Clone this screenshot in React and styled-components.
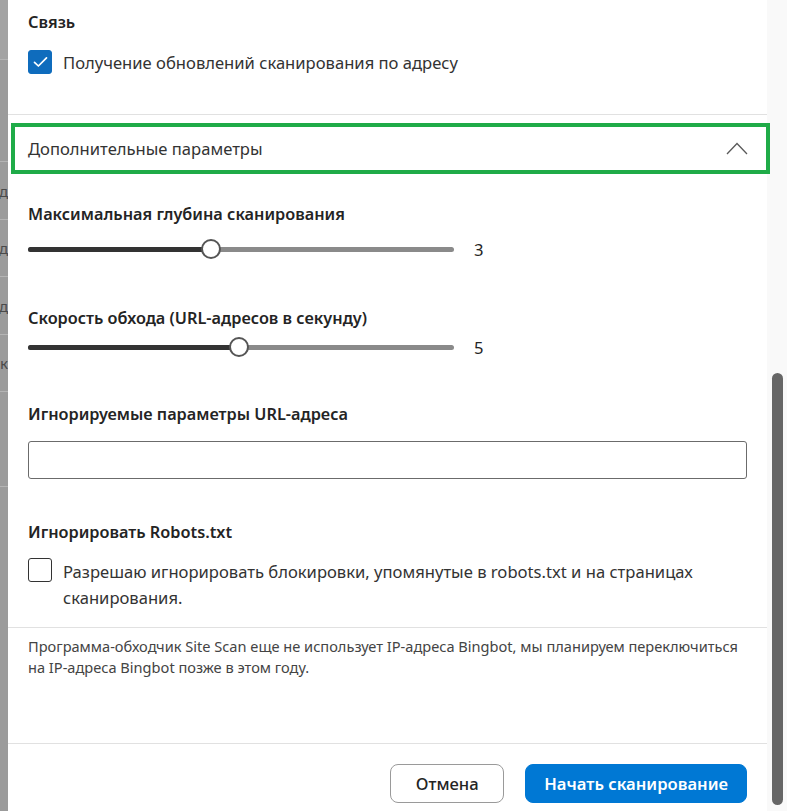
import React from 'react';
import styled, { createGlobalStyle } from 'styled-components';

const Global = createGlobalStyle`
  html, body {
    margin: 0;
    padding: 0;
    overflow: hidden;
    background: #ffffff;
  }
  * { box-sizing: border-box; }
`;

const font = `"Noto Sans", "Open Sans", "Liberation Sans", sans-serif`;

const Screen = styled.div`
  display: flex;
  width: 787px;
  height: 811px;
  font-family: ${font};
  color: #242424;
`;

const Backdrop = styled.div`
  width: 8px;
  display: flex;
  flex-direction: column;
  background: #999999;
  overflow: hidden;
`;

const BackRow = styled.div`
  height: ${({ $h }) => $h}px;
  flex: ${({ $grow }) => ($grow ? 1 : 'none')};
  border-bottom: 1px solid ${({ $line }) => ($line ? '#b4b4b4' : 'transparent')};
  background: ${({ $light }) => ($light ? '#a3a3a3' : '#9b9b9b')};
  display: flex;
  align-items: center;
  justify-content: flex-end;
  font-size: 15px;
  color: #4a4a4a;
  white-space: nowrap;
`;

const Panel = styled.div`
  flex: 1;
  display: flex;
  flex-direction: column;
  background: #ffffff;
  position: relative;
`;

const Section = styled.div`
  padding: ${({ $pad }) => $pad};
`;

const Heading = styled.div`
  font-size: 16.3px;
  font-weight: 600;
  line-height: 24px;
  margin-top: ${({ $mt }) => $mt || 0}px;
`;

const CheckRow = styled.label`
  display: flex;
  align-items: flex-start;
  gap: 11px;
  margin-top: ${({ $mt }) => $mt || 0}px;
`;

const Box = styled.span`
  flex: none;
  width: 24px;
  height: 24px;
  border-radius: 3px;
  display: flex;
  align-items: center;
  justify-content: center;
  background: ${({ $on }) => ($on ? '#0f6cbd' : '#ffffff')};
  border: 1.5px solid ${({ $on }) => ($on ? '#0f6cbd' : '#333333')};
`;

const CheckText = styled.span`
  font-size: 16.6px;
  line-height: 26px;
  color: #333333;
  margin-top: ${({ $mt }) => $mt || 0}px;
`;

const Divider = styled.div`
  height: 1px;
  background: #e1e1e1;
`;

const AccordionHeader = styled.button`
  position: relative;
  z-index: 2;
  margin: 8px -3px 0 3px;
  height: 51px;
  border: 4px solid #1fab48;
  background: #ffffff;
  display: flex;
  align-items: center;
  justify-content: space-between;
  padding: 0 18px 0 13px;
  font-family: ${font};
  font-size: 16.6px;
  color: #333333;
  cursor: pointer;
`;

const SliderRow = styled.div`
  display: flex;
  align-items: center;
  height: 24px;
  margin-top: ${({ $mt }) => $mt || 0}px;
`;

const Track = styled.div`
  position: relative;
  width: 426px;
  height: 5px;
  border-radius: 3px;
  background: #8a8a8a;
`;

const Fill = styled.div`
  height: 100%;
  border-radius: 3px;
  background: #333333;
`;

const Thumb = styled.div`
  position: absolute;
  top: 50%;
  width: 20px;
  height: 20px;
  margin: -10px 0 0 -10px;
  border-radius: 50%;
  background: #ffffff;
  border: 2px solid #555555;
`;

const Value = styled.span`
  margin-left: 20px;
  font-size: 16.6px;
  color: #242424;
`;

const TextInput = styled.input`
  display: block;
  width: 100%;
  height: 38px;
  margin-top: 15px;
  border: 1px solid #6b6b6b;
  border-radius: 3px;
  font-family: ${font};
  font-size: 15px;
  padding: 0 10px;
  outline: none;
`;

const Note = styled.p`
  margin: 0;
  font-size: 14.6px;
  line-height: 21px;
  color: #444444;
`;

const Spacer = styled.div`
  flex: 1;
`;

const Footer = styled.div`
  display: flex;
  justify-content: flex-end;
  gap: 21px;
  padding: 20px 20px 8px;
`;

const Button = styled.button`
  height: 39px;
  min-width: 114px;
  padding: 0 18px;
  border-radius: 8px;
  font-family: ${font};
  font-size: 16.6px;
  font-weight: ${({ $primary }) => ($primary ? 600 : 500)};
  cursor: pointer;
  border: 1px solid ${({ $primary }) => ($primary ? '#0078d4' : '#9a9a9a')};
  background: ${({ $primary }) => ($primary ? '#0078d4' : '#ffffff')};
  color: ${({ $primary }) => ($primary ? '#ffffff' : '#242424')};
`;

const ScrollTrack = styled.div`
  width: 20px;
  background: #f9f9f9;
  display: flex;
  flex-direction: column;
  align-items: center;
  justify-content: flex-end;
  padding-bottom: 6px;
`;

const ScrollThumb = styled.div`
  width: 11px;
  height: 432px;
  border-radius: 6px;
  background: #666666;
`;

const Slider = ({ pct, value, mt }) => (
  <SliderRow $mt={mt}>
    <Track>
      <Fill style={{ width: `${pct}%` }} />
      <Thumb style={{ left: `${pct}%` }} />
    </Track>
    <Value>{value}</Value>
  </SliderRow>
);

const Check = () => (
  <svg width="15" height="12" viewBox="0 0 15 12">
    <path d="M1.5 6.3 L5.4 10 L13.5 1.8" fill="none" stroke="#fff" strokeWidth="1.7" strokeLinecap="round" strokeLinejoin="round" />
  </svg>
);

const ChevronUp = () => (
  <svg width="22" height="13" viewBox="0 0 22 13">
    <path d="M1 12 L11 1.5 L21 12" fill="none" stroke="#5a5a5a" strokeWidth="1.3" />
  </svg>
);

export default function App() {
  return (
    <>
      <Global />
      <Screen>
        <Backdrop>
          <BackRow $h={60} $light $line />
          <BackRow $h={102} $line />
          <BackRow $h={58} $line>д</BackRow>
          <BackRow $h={57} $line>д</BackRow>
          <BackRow $h={58} $line>д</BackRow>
          <BackRow $h={57} $line>к</BackRow>
          <BackRow $h={95} $line />
          <BackRow $grow />
        </Backdrop>

        <Panel>
          <Section $pad="10px 20px 38px">
            <Heading>Связь</Heading>
            <CheckRow $mt={16}>
              <Box $on><Check /></Box>
              <CheckText>Получение обновлений сканирования по адресу</CheckText>
            </CheckRow>
          </Section>
          <Divider />

          <AccordionHeader>
            <span>Дополнительные параметры</span>
            <ChevronUp />
          </AccordionHeader>

          <Section $pad="0 20px 16px">
            <Heading $mt={28}>Максимальная глубина сканирования</Heading>
            <Slider pct={43} value="3" mt={11} />

            <Heading $mt={45}>Скорость обхода (URL-адресов в секунду)</Heading>
            <Slider pct={49.5} value="5" mt={5} />

            <Heading $mt={43}>Игнорируемые параметры URL-адреса</Heading>
            <TextInput type="text" />

            <Heading $mt={41}>Игнорировать Robots.txt</Heading>
            <CheckRow $mt={14}>
              <Box />
              <CheckText $mt={1}>
                Разрешаю игнорировать блокировки, упомянутые в robots.txt и на страницах сканирования.
              </CheckText>
            </CheckRow>
          </Section>
          <Divider />

          <Section $pad="8px 20px 0">
            <Note>
              Программа-обходчик Site Scan еще не использует IP-адреса Bingbot, мы планируем переключиться на IP-адреса Bingbot позже в этом году.
            </Note>
          </Section>

          <Spacer />
          <Divider />
          <Footer>
            <Button>Отмена</Button>
            <Button $primary>Начать сканирование</Button>
          </Footer>
        </Panel>

        <ScrollTrack>
          <ScrollThumb />
        </ScrollTrack>
      </Screen>
    </>
  );
}
